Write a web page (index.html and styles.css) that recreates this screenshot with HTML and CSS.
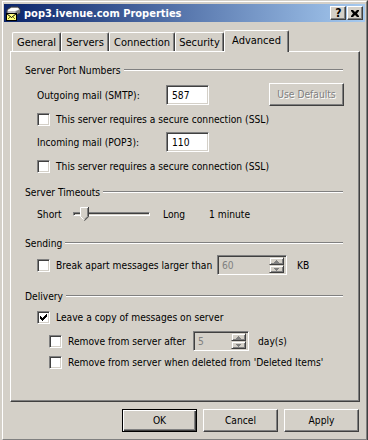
FILE: index.html
```html
<!DOCTYPE html>
<html lang="en">
<head>
    <meta charset="UTF-8">
    <title>pop3.ivenue.com Properties</title>
    <link rel="stylesheet" href="styles.css">
</head>
<body>

<div class="window">
  <div class="window-inner">

    <div class="titlebar">
        <svg class="app-icon" width="16" height="16" viewBox="0 0 16 16">
            <path d="M2 5 L6 2 L13 2 L15 4 L15 8 L11 10 L2 10 Z" fill="#c0c0c0" stroke="#404040" stroke-width="1"/>
            <path d="M3 5 L6.5 3 L12.5 3 L14 4.5 L10 6 L3 6 Z" fill="#ffffff"/>
            <path d="M10.5 6.5 L14.5 4.5 L14.5 7.5 L10.5 9.5 Z" fill="#808080"/>
            <rect x="1.5" y="8.5" width="10" height="7" fill="#ffff80" stroke="#000" stroke-width="1"/>
            <path d="M1.5 8.5 L6.5 12.5 L11.5 8.5" fill="none" stroke="#000" stroke-width="1"/>
            <path d="M3 14 L5 12 M10 14 L8 12" stroke="#808000" stroke-width="1"/>
        </svg>
        <span class="title">pop3.ivenue.com Properties</span>
        <div class="caption-buttons">
            <div class="caption-btn help">?</div>
            <div class="caption-btn">
                <svg width="8" height="7" viewBox="0 0 8 7">
                    <path d="M0 0h2l2 2 2-2h2v1L6 3.5 8 6v1H6L4 5 2 7H0V6l2-2.5L0 1z" fill="#000"/>
                </svg>
            </div>
        </div>
    </div>

    <div class="tabs">
        <div class="tab w-general">General</div>
        <div class="tab w-servers">Servers</div>
        <div class="tab w-connection">Connection</div>
        <div class="tab w-security">Security</div>
        <div class="tab w-advanced active">Advanced</div>
    </div>

    <div class="panel">

        <!-- Server Port Numbers -->
        <div class="group-head"><span>Server Port Numbers</span><div class="etch"></div></div>

        <div class="row port-row gap8">
            <span class="port-label">Outgoing mail (SMTP):</span>
            <div class="textbox">587</div>
            <div class="btn disabled use-defaults">Use Defaults</div>
        </div>

        <div class="row check-row gap8">
            <div class="check"></div>
            <span>This server requires a secure connection (SSL)</span>
        </div>

        <div class="row port-row gap6">
            <span class="port-label">Incoming mail (POP3):</span>
            <div class="textbox">110</div>
        </div>

        <div class="row check-row gap8">
            <div class="check"></div>
            <span>This server requires a secure connection (SSL)</span>
        </div>

        <!-- Server Timeouts -->
        <div class="group-head gap12"><span>Server Timeouts</span><div class="etch"></div></div>

        <div class="row slider-row gap8">
            <span class="slider-min">Short</span>
            <div class="slider">
                <div class="slider-track"></div>
                <svg class="slider-thumb" width="9" height="14" viewBox="0 0 9 14">
                    <path d="M0 0 H9 V9.5 L4.5 14 L0 9.5 Z" fill="#d4d0c8"/>
                    <path d="M0.5 9.5 V0.5 H8" fill="none" stroke="#fff"/>
                    <path d="M8.5 0 V9.7 L4.5 13.7" fill="none" stroke="#404040"/>
                    <path d="M7.5 1 V9.3 L4.5 12.3" fill="none" stroke="#808080"/>
                    <path d="M0.5 9.5 L3.5 12.5" fill="none" stroke="#fff"/>
                </svg>
            </div>
            <span class="slider-max">Long</span>
            <span>1 minute</span>
        </div>

        <!-- Sending -->
        <div class="group-head gap15"><span>Sending</span><div class="etch"></div></div>

        <div class="row spin-row gap5">
            <div class="check"></div>
            <span class="break-label">Break apart messages larger than</span>
            <div class="spinbox break-spin">
                <span>60</span>
                <div class="spin-buttons">
                    <div class="spin-btn"><svg width="5" height="3" viewBox="0 0 5 3"><path d="M2 0h1v1h1v1h1v1H0V2h1V1h1z" fill="#808080"/></svg></div>
                    <div class="spin-btn"><svg width="5" height="3" viewBox="0 0 5 3"><path d="M0 0h5v1H4v1H3v1H2V2H1V1H0z" fill="#808080"/></svg></div>
                </div>
            </div>
            <span class="unit-kb">KB</span>
        </div>

        <!-- Delivery -->
        <div class="group-head gap14"><span>Delivery</span><div class="etch"></div></div>

        <div class="row check-row gap8">
            <div class="check">
                <svg width="7" height="7" viewBox="0 0 7 7">
                    <path d="M6 0h1v3H6v1H5v1H4v1H3v1H2V6H1V5H0V2h1v1h1v1h1V3h1V2h1V1h1z" fill="#000"/>
                </svg>
            </div>
            <span>Leave a copy of messages on server</span>
        </div>

        <div class="row spin-row sub gap7">
            <div class="check"></div>
            <span class="remove-label">Remove from server after</span>
            <div class="spinbox days-spin">
                <span>5</span>
                <div class="spin-buttons">
                    <div class="spin-btn"><svg width="5" height="3" viewBox="0 0 5 3"><path d="M2 0h1v1h1v1h1v1H0V2h1V1h1z" fill="#808080"/></svg></div>
                    <div class="spin-btn"><svg width="5" height="3" viewBox="0 0 5 3"><path d="M0 0h5v1H4v1H3v1H2V2H1V1H0z" fill="#808080"/></svg></div>
                </div>
            </div>
            <span class="unit-days">day(s)</span>
        </div>

        <div class="row check-row sub gap5">
            <div class="check"></div>
            <span>Remove from server when deleted from 'Deleted Items'</span>
        </div>

    </div>

    <div class="dialog-buttons">
        <div class="btn default">OK</div>
        <div class="btn">Cancel</div>
        <div class="btn">Apply</div>
    </div>

  </div>
</div>

</body>
</html>
```

FILE: styles.css
```css
* {
    box-sizing: border-box;
}

body {
    margin: 0;
    background-color: #d4d0c8;
    font-family: "DejaVu Sans Condensed", "DejaVu Sans", sans-serif;
    font-stretch: condensed;
    font-size: 10.2px;
    color: #000;
    white-space: nowrap;
}

.window {
    width: 367px;
    height: 441px;
    margin-left: 1px;
    border: 1px solid;
    border-color: #d4d0c8 #404040 #404040 #d4d0c8;
}

.window-inner {
    height: 100%;
    border: 1px solid;
    border-color: #fff #808080 #808080 #fff;
    padding: 2px 1px 0 1px;
}

/* title bar */
.titlebar {
    height: 18px;
    display: flex;
    align-items: center;
    padding-left: 1px;
    background: linear-gradient(to right, #0a246a, #a6caf0);
}

.app-icon {
    flex: none;
    margin-right: 3px;
}

.title {
    color: #fff;
    font-weight: bold;
    font-size: 11px;
    flex: 1;
}

.caption-buttons {
    display: flex;
    gap: 1px;
    margin-right: 2px;
}

.caption-btn {
    width: 16px;
    height: 14px;
    display: flex;
    align-items: center;
    justify-content: center;
    background-color: #d4d0c8;
    border: 1px solid;
    border-color: #fff #404040 #404040 #fff;
    box-shadow: inset -1px -1px #808080;
}

.caption-btn.help {
    font-weight: bold;
    font-size: 12px;
    line-height: 12px;
    padding-left: 1px;
}

/* tabs */
.tabs {
    display: flex;
    align-items: flex-end;
    height: 21px;
    margin-top: 8px;
    padding-left: 8px;
}

.tab {
    height: 19px;
    display: flex;
    align-items: center;
    justify-content: center;
    padding-top: 1px;
    font-size: 11px;
    border-top: 1px solid #fff;
    border-left: 1px solid #fff;
    border-right: 1px solid #404040;
    border-radius: 2px 2px 0 0;
    box-shadow: inset -1px 0 #808080;
}

.tab.active {
    height: 22px;
    margin-bottom: -1px;
    padding-top: 0;
    padding-bottom: 3px;
    position: relative;
    z-index: 1;
    background-color: #d4d0c8;
}

.w-general { width: 49px; }
.w-servers { width: 48px; }
.w-connection { width: 66px; }
.w-security { width: 49px; }
.w-advanced { width: 65px; }

/* tab page */
.panel {
    width: 350px;
    height: 351px;
    margin-left: 6px;
    padding: 11px 16px 0 14px;
    border: 1px solid;
    border-color: #fff #404040 #404040 #fff;
    box-shadow: inset -1px -1px #808080;
}

.group-head {
    height: 14px;
    display: flex;
    align-items: center;
}

.etch {
    flex: 1;
    margin-left: 3px;
    margin-top: -1px;
    border-top: 1px solid #808080;
    border-bottom: 1px solid #fff;
}

.row {
    display: flex;
    align-items: center;
    padding-left: 12px;
}

.row.sub {
    padding-left: 24px;
}

.gap5 { margin-top: 5px; }
.gap6 { margin-top: 6px; }
.gap7 { margin-top: 7px; }
.gap8 { margin-top: 8px; }
.gap12 { margin-top: 12px; }
.gap14 { margin-top: 14px; }
.gap15 { margin-top: 15px; }

.port-row {
    height: 20px;
}

.port-label {
    width: 129px;
    flex: none;
}

.textbox, .spinbox {
    height: 20px;
    flex: none;
    display: flex;
    align-items: center;
    padding-left: 5px;
    background-color: #fff;
    border: 1px solid;
    border-color: #808080 #fff #fff #808080;
    box-shadow: inset 1px 1px #404040, inset -1px -1px #d4d0c8;
}

.textbox {
    width: 43px;
}

.use-defaults {
    width: 81px;
    height: 20px;
    margin-left: auto;
    margin-right: -1px;
    align-self: flex-start;
    margin-top: -2px;
}

.check-row {
    height: 13px;
}

.check {
    width: 13px;
    height: 13px;
    flex: none;
    display: flex;
    align-items: center;
    justify-content: center;
    margin-right: 6px;
    background-color: #fff;
    border: 1px solid;
    border-color: #808080 #fff #fff #808080;
    box-shadow: inset 1px 1px #404040, inset -1px -1px #d4d0c8;
}

/* slider */
.slider-row {
    height: 14px;
}

.slider-min {
    width: 36px;
    flex: none;
}

.slider {
    width: 77px;
    height: 14px;
    flex: none;
    position: relative;
    display: flex;
    align-items: center;
}

.slider-track {
    width: 100%;
    height: 4px;
    border: 1px solid;
    border-color: #808080 #fff #fff #808080;
    box-shadow: inset 1px 1px #404040;
}

.slider-thumb {
    position: absolute;
    left: 7px;
    top: 0;
}

.slider-max {
    width: 46px;
    flex: none;
    margin-left: 13px;
}

/* spin boxes */
.spin-row {
    height: 20px;
}

.break-label {
    width: 161px;
    flex: none;
}

.remove-label {
    width: 125px;
    flex: none;
}

.spinbox {
    background-color: #d4d0c8;
    color: #808080;
    padding-left: 4px;
    padding-right: 2px;
    justify-content: space-between;
}

.break-spin {
    width: 70px;
}

.days-spin {
    width: 56px;
}

.spin-buttons {
    display: flex;
    flex-direction: column;
}

.spin-btn {
    width: 15px;
    height: 8px;
    display: flex;
    align-items: center;
    justify-content: center;
    border: 1px solid;
    border-color: #d4d0c8 #404040 #404040 #d4d0c8;
    box-shadow: inset 1px 1px #fff, inset -1px -1px #808080;
}

.unit-kb {
    margin-left: 10px;
}

.unit-days {
    margin-left: 9px;
}

/* buttons */
.btn {
    width: 75px;
    height: 23px;
    display: flex;
    align-items: center;
    justify-content: center;
    background-color: #d4d0c8;
    border: 1px solid;
    border-color: #fff #404040 #404040 #fff;
    box-shadow: inset -1px -1px #808080;
}

.btn.default {
    border-color: #000;
    box-shadow: inset 1px 1px #fff, inset -1px -1px #404040, inset -2px -2px #808080;
}

.btn.disabled {
    color: #808080;
    text-shadow: 1px 1px #fff;
}

.dialog-buttons {
    display: flex;
    justify-content: flex-end;
    gap: 6px;
    margin-top: 7px;
    margin-right: 6px;
}
```
